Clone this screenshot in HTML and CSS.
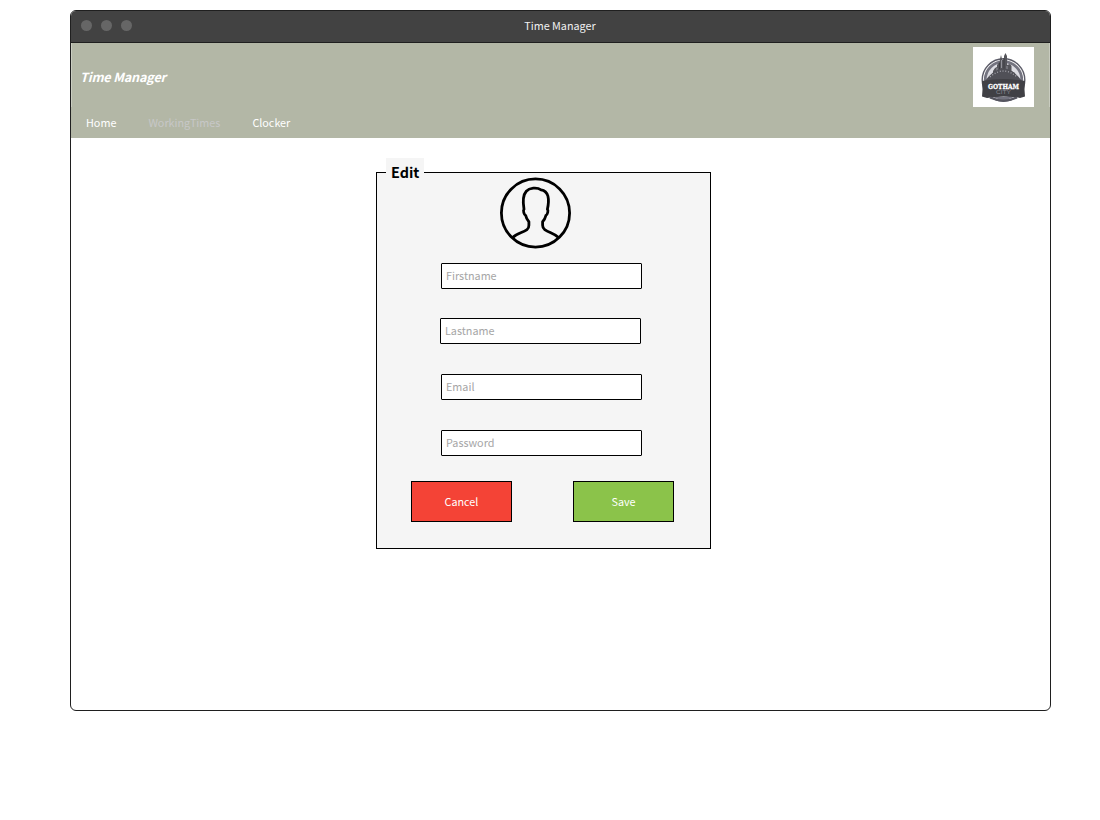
FILE: index.html
```html
<!DOCTYPE html>
<html lang="en">
<head>
<meta charset="utf-8">
<title>Time Manager</title>
<link rel="stylesheet" href="styles.css">
</head>
<body>
<div class="window">
  <div class="titlebar">
    <div class="dots"><i class="dot"></i><i class="dot"></i><i class="dot"></i></div>
    <span class="window-title">Time Manager</span>
  </div>
  <header class="header">
    <h1 class="brand">Time Manager</h1>
    <div class="logo">
      <svg width="61" height="60" viewBox="0 0 61 60">
        <circle cx="30.500" cy="33" r="21.300" fill="#fff" stroke="#5c5c68" stroke-width="1.400"/>
        <circle cx="30.500" cy="33" r="18.300" fill="#dcdce2" stroke="#73737f" stroke-width="2.800"/>
        <path d="M20 31V24l2-3 2-1v-2l3-4v-2l1-4 1 4v1l2-1V9l1.500-3L34 9v9l3-1 1.500 2v5l3.500 2v6z" fill="#55555b"/>
        <path d="M28.500 13v8M34 19v5M24 21v5" stroke="#9a9aa1" stroke-width=".9"/>
        <path d="M26.500 16v7M31 11v12" stroke="#3c3c42" stroke-width="1"/>
        <path d="M12 34q18.500-25 37 0z" fill="#505057"/>
        <path d="M17 30q13.500-12 27 0" fill="none" stroke="#a5a5ad" stroke-width="1.300" stroke-dasharray="1 1.800"/>
        <path d="M9 34q21.500-4 43 0l-.5 8.500.5 7-5 1.500q-16.500-3-33 0L9 49.500l.5-7z" fill="#404045"/>
        <path d="M17 50.500q13.500 6 27 0" fill="none" stroke="#55555f" stroke-width="2.400"/>
        <text class="logo-name" x="30.500" y="41.500" text-anchor="middle" textLength="31" lengthAdjust="spacingAndGlyphs">GOTHAM</text>
        <text class="logo-city" x="30.500" y="47.200" text-anchor="middle" textLength="15" lengthAdjust="spacingAndGlyphs">CITY</text>
      </svg>
    </div>
  </header>
  <nav class="nav">
    <a class="nav-link home">Home</a>
    <a class="nav-link muted">WorkingTimes</a>
    <a class="nav-link">Clocker</a>
  </nav>
  <main class="content">
    <form class="panel">
      <div class="legend">Edit</div>
      <svg class="avatar" width="72" height="72" viewBox="0 0 72 72" fill="none" stroke="#000" stroke-width="2.800" stroke-linejoin="round">
        <circle cx="36.500" cy="36" r="34.100"/>
        <path d="M13.700 60.500C17.500 56.500 23.500 55.800 28 52.600c1.700-1.200 1.900-2.200 1.900-4.300v-3.500c-2.300-2.500-2.800-4.300-3.200-6.300-1.600-.8-2.900-5-1.700-6.300-1.600-9.500-.9-14.400 2.300-18 3-3.300 10.500-4.300 14.800-1.400 3.300.5 5.800 2.600 6.800 6.200.9 3.600.7 8-.5 13.200 1.200 1.300.1 5.500-1.500 6.300-.5 2-1 3.800-3.300 6.300v3.500c0 2.100.4 3.100 2.100 4.300 4.500 3.200 10 4 13.800 7.900"/>
      </svg>
      <input class="field" type="text" placeholder="Firstname">
      <input class="field lastname" type="text" placeholder="Lastname">
      <input class="field" type="email" placeholder="Email">
      <input class="field" type="password" placeholder="Password">
      <div class="actions">
        <button class="btn cancel" type="button">Cancel</button>
        <button class="btn save" type="button">Save</button>
      </div>
    </form>
  </main>
</div>
</body>
</html>
```

FILE: styles.css
```css
* { box-sizing: border-box; }
body {
  margin: 0;
  background: #fff;
  font: 10.8px/18px "Noto Sans CJK SC", "Noto Sans", sans-serif;
}
.window {
  width: 981px;
  height: 701px;
  margin: 10px 0 0 70px;
  border: 1px solid #1f1f1f;
  border-radius: 6px;
  overflow: hidden;
  background: #fff;
}
.titlebar {
  display: grid;
  grid-template-columns: 1fr auto 1fr;
  align-items: center;
  height: 32px;
  background: #424242;
  border-bottom: 1px solid #1f1f1f;
  color: #f0f0f0;
}
.window-title { padding-bottom: 3px; margin-left: -1px; }
.dots { display: flex; gap: 9px; padding: 0 0 3px 10px; }
.dot { width: 11px; height: 11px; border-radius: 50%; background: #666; }
.header {
  display: flex;
  justify-content: space-between;
  height: 64px;
  padding: 4px 15px 0 8px;
  background: #b3b7a6;
  border: solid #c9ccc0;
  border-width: 0 1px;
}
.brand {
  margin: 20px 0 0;
  font-size: 12.6px;
  line-height: 20px;
  letter-spacing: -0.16px;
  font-weight: 700;
  font-style: italic;
  color: #fff;
}
.logo { width: 61px; height: 60px; background: #fff; }
.logo svg { display: block; }
.logo-name { font: 700 8px "DejaVu Serif", serif; fill: #fff; stroke: #fff; stroke-width: .3px; }
.logo-city { font: 5px "Liberation Sans", sans-serif; fill: #888891; }
.nav {
  display: flex;
  align-items: center;
  gap: 32px;
  height: 31px;
  padding: 0 0 2px 15px;
  background: #b3b7a6;
}
.nav-link { color: #fff; }
.muted { color: #c7c7c7; }
.content { padding: 34px 0 0 305px; }
.panel {
  position: relative;
  display: flex;
  flex-direction: column;
  width: 335px;
  height: 377px;
  padding: 4px 0 0 64px;
  border: 1px solid #000;
  background: #f5f5f5;
}
.legend {
  position: absolute;
  left: 9px;
  top: -15px;
  width: 38px;
  height: 30px;
  padding-left: 5px;
  background: #f5f5f5;
  font-size: 14.4px;
  line-height: 27px;
  font-weight: 700;
}
.avatar { margin: 0 0 14px 58px; flex: none; }
.field {
  width: 201px;
  height: 26px;
  margin: 0 0 30px;
  padding: 0 4px 2px;
  border: 1px solid #000;
  border-radius: 1px;
  background: #fff;
  font: inherit;
}
.field:first-of-type { margin-bottom: 29px; }
.field:last-of-type { margin-bottom: 25px; }
.lastname { margin-left: -1px; }
.field::placeholder { color: #a6a6a6; opacity: 1; }
.actions { display: flex; gap: 61px; margin-left: -30px; }
.btn {
  width: 101px;
  height: 41px;
  padding: 0 0 2px;
  border: 1px solid #000;
  color: #fff;
  font: inherit;
}
.cancel { background: #f44336; }
.save { background: #8bc34a; }
```
